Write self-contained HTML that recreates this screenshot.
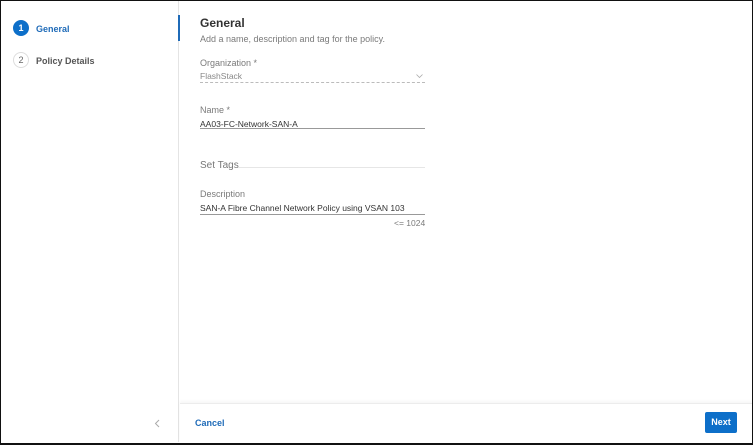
<!DOCTYPE html><html><head><style>
*{margin:0;padding:0;box-sizing:border-box}
body{width:753px;height:445px;overflow:hidden;background:#fff;font-family:"Liberation Sans",sans-serif;position:relative}
.frame{position:absolute;left:0;top:0;width:753px;height:445px;border:1px solid #111;border-bottom-width:2px}
.side{position:absolute;left:1px;top:1px;width:178px;height:441px;border-right:1px solid #e4e4e4}
.main{position:absolute;left:180px;top:1px;width:572px;height:402px;background:#fff}
.foot{position:absolute;left:180px;top:403px;width:572px;height:39px;border-top:1px solid #ececec;box-shadow:0 -2px 3px rgba(0,0,0,.04)}
.abs{position:absolute;white-space:nowrap}
.c{width:16px;height:16px;border-radius:50%;font-size:9px;text-align:center;line-height:16px}
.lab{font-size:9px;color:#7a7a7a}
.val{font-size:8.5px;color:#333}
</style></head><body>
<div class="side">
<div class="abs c" style="left:12px;top:19px;background:#0d6fc9;color:#fff;font-weight:bold">1</div>
<div class="abs" style="left:35px;top:23px;font-size:9px;color:#1f6bb8;font-weight:bold">General</div>
<div class="abs c" style="left:12px;top:51px;border:1px solid #ddd;color:#666;line-height:14px">2</div>
<div class="abs" style="left:35px;top:55px;font-size:9px;color:#555;font-weight:bold">Policy Details</div>
<svg class="abs" style="left:153px;top:418px" width="6" height="9" viewBox="0 0 6 9"><path d="M5 1L1.5 4.5L5 8" fill="none" stroke="#aaa" stroke-width="1"/></svg>
</div>
<div class="abs" style="left:178px;top:15px;width:2px;height:26px;background:#1f6bb8"></div>
<div class="main">
<div class="abs" style="left:20px;top:15px;font-size:12px;font-weight:bold;color:#333">General</div>
<div class="abs lab" style="left:20px;top:33px">Add a name, description and tag for the policy.</div>
<div class="abs lab" style="left:20px;top:57px">Organization *</div>
<div class="abs val" style="left:20px;top:70px;color:#888">FlashStack</div>
<svg class="abs" style="left:236px;top:73px" width="7" height="4" viewBox="0 0 7 4"><path d="M0.5 0.5L3.5 3.5L6.5 0.5" fill="none" stroke="#aaa" stroke-width="0.8"/></svg>
<div class="abs" style="left:20px;top:81px;width:225px;border-top:1px dashed #bbb"></div>
<div class="abs lab" style="left:20px;top:104px">Name *</div>
<div class="abs val" style="left:20px;top:118px">AA03-FC-Network-SAN-A</div>
<div class="abs" style="left:20px;top:127px;width:225px;border-top:1px solid #999"></div>
<div class="abs" style="left:20px;top:159px;font-size:10px;color:#777">Set Tags</div>
<div class="abs" style="left:58px;top:166px;width:187px;border-top:1px solid #e6e6e6"></div>
<div class="abs lab" style="left:20px;top:188px">Description</div>
<div class="abs val" style="left:20px;top:202px">SAN-A Fibre Channel Network Policy using VSAN 103</div>
<div class="abs" style="left:20px;top:213px;width:225px;border-top:1px solid #999"></div>
<div class="abs lab" style="left:214px;top:217px;font-size:8.5px">&lt;= 1024</div>
</div>
<div class="foot">
<div class="abs" style="left:15px;top:14px;font-size:9px;font-weight:bold;color:#1f6bb8">Cancel</div>
<div class="abs" style="left:525px;top:8px;width:32px;height:21px;background:#0d6fc9;border-radius:2px;color:#fff;font-size:9px;font-weight:bold;text-align:center;line-height:21px">Next</div>
</div>
<div class="frame"></div>
</body></html>
